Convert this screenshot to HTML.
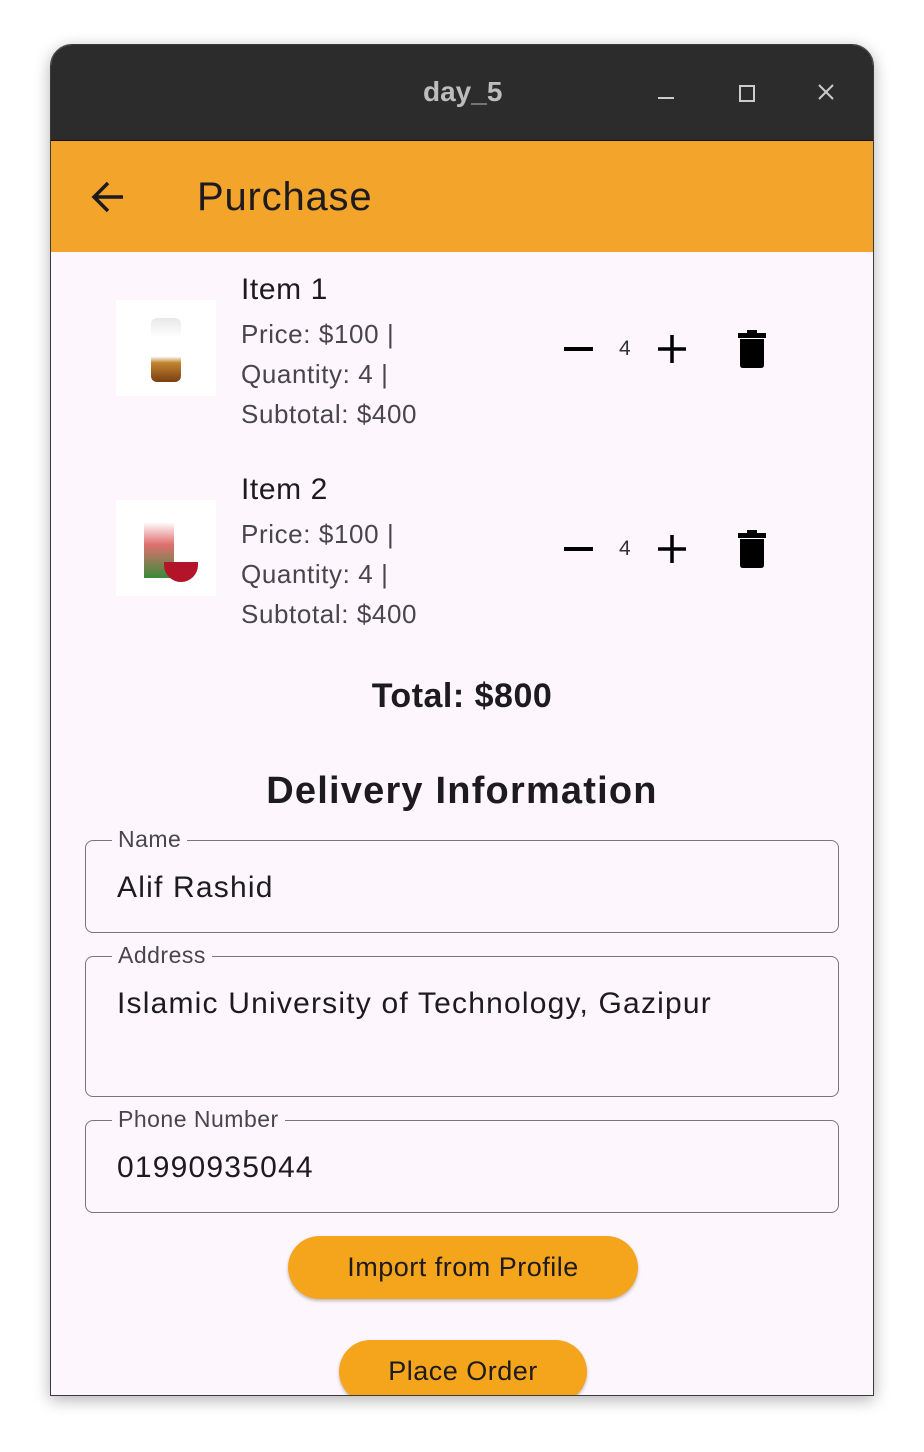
<html><head><style>
body{margin:0;width:924px;height:1452px;background:#fff;position:relative;overflow:hidden;font-family:"Liberation Sans",sans-serif}
.win{position:absolute;left:50px;top:44px;width:822px;height:1350px;border:1px solid #3a3a3a;border-radius:22px 22px 0 0;overflow:hidden;background:#fdf6fc;box-shadow:0 4px 16px rgba(0,0,0,.3)}
.tb{position:absolute;left:0;top:0;width:100%;height:95px;background:#2c2c2c;border-bottom:1px solid #111}
.ab{position:absolute;left:0;top:96px;width:100%;height:111px;background:#f3a42b}
.a{position:absolute;white-space:nowrap}
.it{color:#49454f;font-size:26px;letter-spacing:.6px}
.fld{position:absolute;left:34px;width:752px;border:1.5px solid #79747e;border-radius:8px}
.lab{position:absolute;left:26px;top:-15px;background:#fdf6fc;padding:0 6px;font-size:23px;color:#49454f;letter-spacing:.5px}
.val{position:absolute;left:31px;font-size:30px;color:#1d1b20;letter-spacing:1.2px}
.btn{position:absolute;background:#f4a51c;border-radius:32px;font-size:27px;color:#1d1b20;text-align:center;box-shadow:0 2px 3px rgba(0,0,0,.25)}
</style></head><body>
<div class="win">
<div class="tb">
<div class="a" style="left:372px;top:31px;color:#bdbdbd;font-size:28px;font-weight:bold">day_5</div>
<div class="a" style="left:607px;top:52px;width:16px;height:2px;background:#ccc"></div>
<div class="a" style="left:688px;top:40px;width:12px;height:13px;border:2px solid #ccc"></div>
<svg class="a" style="left:767px;top:39px" width="16" height="16"><path d="M1 1L15 15M15 1L1 15" stroke="#ccc" stroke-width="2"/></svg>
</div>
<div class="ab">
<svg class="a" style="left:40px;top:39px" width="34" height="34"><path d="M32 17H4M17 3L3 17L17 31" stroke="#1d1b20" stroke-width="3.5" fill="none"/></svg>
<div class="a" style="left:146px;top:34px;font-size:40px;color:#1d1b20;letter-spacing:.8px">Purchase</div>
</div>
<div class="a" style="left:65px;top:255px;width:100px;height:96px;background:#fff"><div style="position:absolute;left:35px;top:18px;width:30px;height:64px;border-radius:6px;background:linear-gradient(#e8e8e8 0,#fff 30%,#fff 60%,#c0852e 70%,#7a3e12 100%)"></div></div>
<div class="a" style="left:65px;top:455px;width:100px;height:96px;background:#fff"><div style="position:absolute;left:28px;top:22px;width:30px;height:56px;background:linear-gradient(#fff,#e07070 40%,#3a8a3a)"></div><div style="position:absolute;left:48px;top:62px;width:34px;height:20px;border-radius:0 0 17px 17px;background:#b3142a"></div></div>
<div class="a" style="left:190px;top:228px;font-size:30px;color:#1d1b20;letter-spacing:.6px">Item 1</div>
<div class="a it" style="left:190px;top:274px">Price: $100 |</div>
<div class="a it" style="left:190px;top:314px">Quantity: 4 |</div>
<div class="a it" style="left:190px;top:354px">Subtotal: $400</div>
<div class="a" style="left:190px;top:428px;font-size:30px;color:#1d1b20;letter-spacing:.6px">Item 2</div>
<div class="a it" style="left:190px;top:474px">Price: $100 |</div>
<div class="a it" style="left:190px;top:514px">Quantity: 4 |</div>
<div class="a it" style="left:190px;top:554px">Subtotal: $400</div>
<div class="a" style="left:513px;top:302px;width:29px;height:4px;background:#000"></div>
<div class="a" style="left:568px;top:292px;font-size:21px;color:#333">4</div>
<svg class="a" style="left:606px;top:289px" width="30" height="30"><path d="M15 1V29M1 15H29" stroke="#000" stroke-width="3.5"/></svg>
<svg class="a" style="left:686px;top:284px" width="30" height="40"><path d="M1 4H29V9H1ZM10 1H20V4H10ZM3 10H27V36Q27 39 24 39H6Q3 39 3 36Z" fill="#000"/></svg>
<div class="a" style="left:513px;top:502px;width:29px;height:4px;background:#000"></div>
<div class="a" style="left:568px;top:492px;font-size:21px;color:#333">4</div>
<svg class="a" style="left:606px;top:489px" width="30" height="30"><path d="M15 1V29M1 15H29" stroke="#000" stroke-width="3.5"/></svg>
<svg class="a" style="left:686px;top:484px" width="30" height="40"><path d="M1 4H29V9H1ZM10 1H20V4H10ZM3 10H27V36Q27 39 24 39H6Q3 39 3 36Z" fill="#000"/></svg>
<div class="a" style="left:0;width:822px;text-align:center;top:632px;font-size:34px;font-weight:bold;color:#1d1b20;letter-spacing:.5px">Total: $800</div>
<div class="a" style="left:0;width:822px;text-align:center;top:725px;font-size:38px;font-weight:bold;color:#1d1b20;letter-spacing:1.2px">Delivery Information</div>
<div class="fld" style="top:795px;height:91px"><div class="lab">Name</div><div class="val" style="top:30px">Alif Rashid</div></div>
<div class="fld" style="top:911px;height:139px"><div class="lab">Address</div><div class="val" style="top:30px">Islamic University of Technology, Gazipur</div></div>
<div class="fld" style="top:1075px;height:91px"><div class="lab">Phone Number</div><div class="val" style="top:30px">01990935044</div></div>
<div class="btn" style="left:237px;top:1191px;width:350px;height:63px;line-height:63px;letter-spacing:.5px">Import from Profile</div>
<div class="btn" style="left:288px;top:1295px;width:248px;height:63px;line-height:63px;letter-spacing:.5px">Place Order</div>
</div>
</body></html>
